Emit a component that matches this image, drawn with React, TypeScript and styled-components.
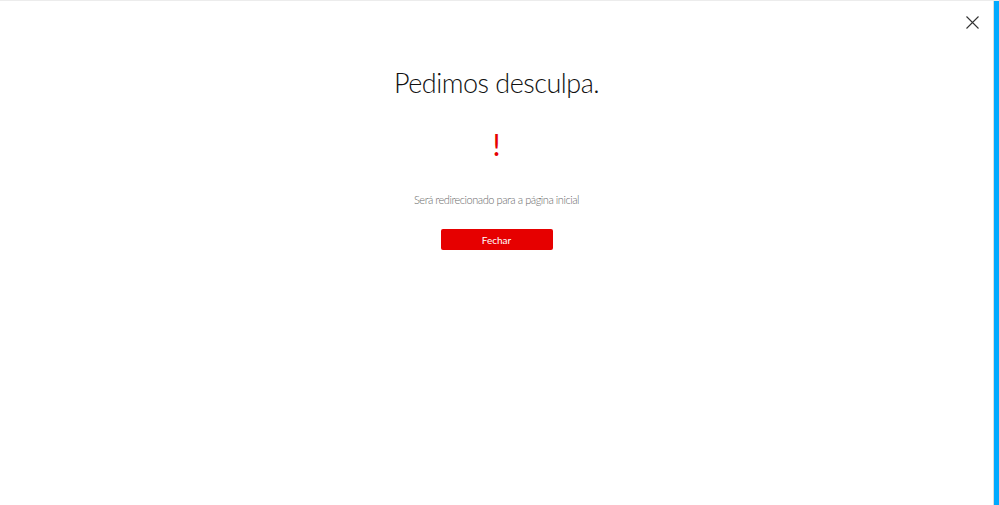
import React from "react";
import styled, { createGlobalStyle } from "styled-components";

const Global = createGlobalStyle`
  html, body { margin: 0; padding: 0; height: 100%; background: #fff; }
  #root { height: 100%; }
  * { box-sizing: border-box; }
`;

const Page = styled.div`
  display: flex;
  height: 505px;
  width: 999px;
  border-top: 1px solid #ececec;
  font-family: Lato, "Liberation Sans", sans-serif;
`;

const Main = styled.main`
  flex: 1;
  position: relative;
  display: flex;
  flex-direction: column;
  align-items: center;
  padding-top: 62px;
`;

const SideBar = styled.div`
  width: 6px;
  border-left: 1px solid #dcdcdc;
  background: #00aaff;
`;

const CloseButton = styled.button`
  position: absolute;
  top: 13px;
  right: 13px;
  width: 16px;
  height: 16px;
  padding: 0;
  border: 0;
  background: transparent;
  display: flex;
  align-items: center;
  justify-content: center;
  cursor: pointer;
`;

const Title = styled.h1`
  margin: 0;
  font-weight: 300;
  font-size: 27px;
  line-height: 40px;
  color: #111;
  letter-spacing: -0.5px;
`;

const Alert = styled.div`
  margin-top: 26px;
  color: #e60000;
  font-size: 30px;
  font-weight: 400;
  line-height: 30px;
  height: 30px;
`;

const Message = styled.p`
  margin: 33px 0 0;
  font-size: 11px;
  line-height: 16px;
  color: #6a6a6a;
  font-weight: 300;
  letter-spacing: -0.45px;
`;

const Primary = styled.button`
  margin-top: 21px;
  width: 112px;
  height: 21px;
  border: 0;
  border-radius: 2px;
  background: #e60000;
  color: #fff;
  font-family: Lato, "Liberation Sans", sans-serif;
  font-size: 10px;
  font-weight: 400;
  cursor: pointer;
`;

export default function App() {
  return (
    <>
      <Global />
      <Page>
        <Main>
          <CloseButton aria-label="Fechar">
            <svg width="13" height="13" viewBox="0 0 13 13">
              <path d="M0.5 0.5 L12.5 12.5 M12.5 0.5 L0.5 12.5" stroke="#333" strokeWidth="1.1" fill="none" />
            </svg>
          </CloseButton>
          <Title>Pedimos desculpa.</Title>
          <Alert>!</Alert>
          <Message>Será redirecionado para a página inicial</Message>
          <Primary>Fechar</Primary>
        </Main>
        <SideBar />
      </Page>
    </>
  );
}
